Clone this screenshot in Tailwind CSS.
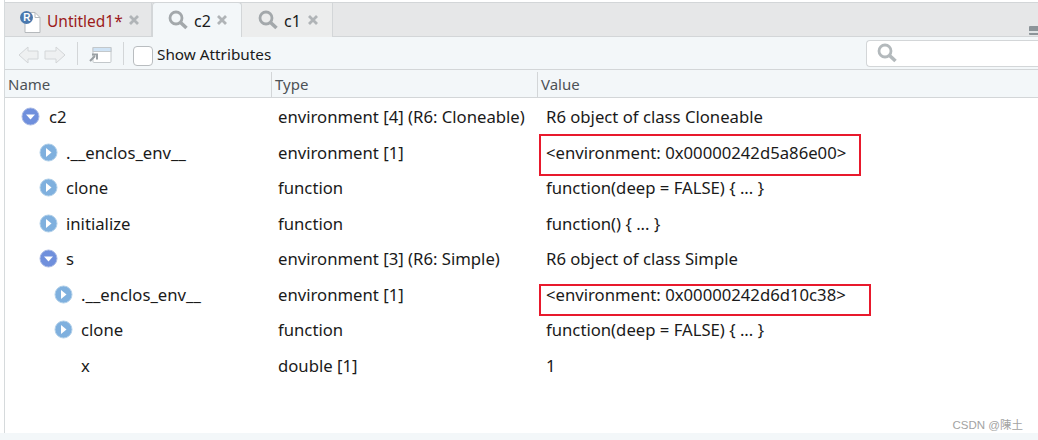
<!DOCTYPE html>
<html lang="en">
<head>
    <meta charset="UTF-8">
    <title>c2</title>
    <script src="https://cdn.jsdelivr.net/npm/@tailwindcss/browser@4"></script>
</head>
<body class="bg-white overflow-hidden">
    <div class="relative w-[1038px] h-[440px] overflow-hidden font-['Noto_Sans',sans-serif] text-[16.7px] text-[#1a1a1a]">
        <div class="h-[433px] ml-[4px] border-l border-[#d6dadc] flex flex-col">
            <!-- Tabs -->
            <div class="h-[35px] mt-[2px] bg-[#e6e7e8] border-y border-[#d3d6d8] flex relative">
                <div class="w-[147px] h-[34px] flex items-center pl-[14px] pt-[3px] border-r border-[#d3d6d8]">
                    <svg width="23" height="24" viewBox="0 0 23 24">
                        <path d="M6 2.5h10l5 5v15H6z" fill="#fff" stroke="#b5b9bc"/>
                        <path d="M16 2.5v5h5" fill="none" stroke="#b5b9bc"/>
                        <circle cx="7.5" cy="7.5" r="6.5" fill="#4a78ad"/>
                        <text x="4.2" y="11.2" font-size="10" font-weight="700" fill="#fff" font-family="Liberation Sans">R</text>
                    </svg>
                    <span class="ml-[5px] text-[15.5px] text-[#9c1b1b]">Untitled1*</span>
                    <svg class="ml-[5px] -mt-[3px]" width="12" height="12" viewBox="0 0 12 12"><path d="M2 2l8 8M10 2l-8 8" stroke="#b0b4b7" stroke-width="2.8"/></svg>
                </div>
                <div class="w-[90px] h-[35px] -mt-[1px] bg-[#f3f7f9] border-x border-t border-[#d3d6d8] rounded-t flex items-center pl-[15px]">
                    <svg width="20" height="20" viewBox="0 0 20 20" fill="none" stroke="#a3a8ab">
                        <circle cx="8" cy="8" r="6" stroke-width="2.8"/>
                        <path d="M12 12l6.5 6" stroke-width="3.6"/>
                    </svg>
                    <span class="ml-[6px] mt-[2px] text-[16px]">c2</span>
                    <svg class="ml-[5px]" width="12" height="12" viewBox="0 0 12 12"><path d="M2 2l8 8M10 2l-8 8" stroke="#b0b4b7" stroke-width="2.8"/></svg>
                </div>
                <div class="w-[91px] h-[34px] bg-[#eceded] border-r border-[#d3d6d8] flex items-center pl-[16px]">
                    <svg width="20" height="20" viewBox="0 0 20 20" fill="none" stroke="#a3a8ab">
                        <circle cx="8" cy="8" r="6" stroke-width="2.8"/>
                        <path d="M12 12l6.5 6" stroke-width="3.6"/>
                    </svg>
                    <span class="ml-[6px] mt-[2px] text-[16px]">c1</span>
                    <svg class="ml-[6px]" width="12" height="12" viewBox="0 0 12 12"><path d="M2 2l8 8M10 2l-8 8" stroke="#b0b4b7" stroke-width="2.8"/></svg>
                </div>
                <div class="absolute left-[1024px] top-[23px] w-[12px] h-[9px] rounded-[1px] bg-[#8c9499] border-t-[3px] border-[#8c9499] flex items-center">
                    <div class="w-full h-[2px] bg-[#dfe3e5]"></div>
                </div>
            </div>
            <!-- Toolbar -->
            <div class="h-[33px] pt-[3px] bg-[#f3f7f9] border-b border-[#d3d6d8] flex items-center pl-[13px] shrink-0">
                <svg width="48" height="20" viewBox="0 0 48 20" fill="#eef0f1" stroke="#d3d6d8">
                    <path d="M1 10l9-8v4h10v8H10v4z"/>
                    <path d="M47 10l-9-8v4H27v8h11v4z"/>
                </svg>
                <div class="w-px h-[23px] -mt-[3px] bg-[#d3d6d8] ml-[11px]"></div>
                <svg class="ml-[10px]" width="24" height="18" viewBox="0 0 24 18">
                    <rect x="5" y="1.5" width="18" height="15" rx="1" fill="#fff" stroke="#c3c8cb"/>
                    <rect x="5" y="1.5" width="18" height="4" fill="#cfe3f5" stroke="#c3c8cb"/>
                    <path d="M2 15l5-5M4 8.5h5v5" fill="none" stroke="#9aa0a4" stroke-width="2"/>
                </svg>
                <div class="w-px h-[23px] -mt-[3px] bg-[#d3d6d8] ml-[11px]"></div>
                <div class="w-[20px] h-[20px] ml-[9px] mt-[2px] bg-white border border-[#b9bdc0] rounded-[4px]"></div>
                <span class="ml-[4px] text-[15.3px]">Show Attributes</span>
                <div class="ml-auto w-[172px] h-[27px] -mt-[3px] bg-white border border-[#d3d6d8] border-r-0 rounded-l flex items-center pl-[10px]">
                    <svg width="20" height="20" viewBox="0 0 20 20" fill="none" stroke="#b3b9bc">
                        <circle cx="8" cy="8" r="6" stroke-width="2.8"/>
                        <path d="M12 12l6.5 6" stroke-width="3.6"/>
                    </svg>
                </div>
            </div>
            <!-- Header -->
            <div class="h-[28px] pt-[2px] bg-[#f3f7f9] border-b border-[#d3d6d8] flex items-center text-[15px] text-[#4d5256] shrink-0">
                <div class="w-[267px] h-full pl-[3px] border-r border-[#d3d6d8] flex items-center">Name</div>
                <div class="w-[266px] h-full pl-[3px] border-r border-[#d3d6d8] flex items-center">Type</div>
                <div class="pl-[3px]">Value</div>
            </div>
            <!-- Rows -->
            <div class="pt-[1px] flex-1">
                <div class="h-[35.5px] flex items-center">
                    <div class="w-[273px] flex items-center pl-[16px]"><svg width="19" height="19" viewBox="0 0 19 19"><circle cx="9.5" cy="9.5" r="8.5" fill="#6f8fdc" stroke="#a9b9e4"/><path d="M5 7.5h9l-4.5 5z" fill="#fff"/></svg><span class="ml-[9px]">c2</span></div>
                    <div class="w-[268px]">environment [4] (R6: Cloneable)</div>
                    <div>R6 object of class Cloneable</div>
                </div>
                <div class="h-[35.5px] flex items-center">
                    <div class="w-[273px] flex items-center pl-[34px]"><svg width="19" height="19" viewBox="0 0 19 19"><circle cx="9.5" cy="9.5" r="8.5" fill="#7fb0de" stroke="#b0cfe9"/><path d="M7 5l5.5 4.5L7 14z" fill="#fff"/></svg><span class="ml-[8px]">.__enclos_env__</span></div>
                    <div class="w-[268px]">environment [1]</div>
                    <div>&lt;environment: 0x00000242d5a86e00&gt;</div>
                </div>
                <div class="h-[35.5px] flex items-center">
                    <div class="w-[273px] flex items-center pl-[34px]"><svg width="19" height="19" viewBox="0 0 19 19"><circle cx="9.5" cy="9.5" r="8.5" fill="#7fb0de" stroke="#b0cfe9"/><path d="M7 5l5.5 4.5L7 14z" fill="#fff"/></svg><span class="ml-[8px]">clone</span></div>
                    <div class="w-[268px]">function</div>
                    <div>function(deep = FALSE) { ... }</div>
                </div>
                <div class="h-[35.5px] flex items-center">
                    <div class="w-[273px] flex items-center pl-[34px]"><svg width="19" height="19" viewBox="0 0 19 19"><circle cx="9.5" cy="9.5" r="8.5" fill="#7fb0de" stroke="#b0cfe9"/><path d="M7 5l5.5 4.5L7 14z" fill="#fff"/></svg><span class="ml-[8px]">initialize</span></div>
                    <div class="w-[268px]">function</div>
                    <div>function() { ... }</div>
                </div>
                <div class="h-[35.5px] flex items-center">
                    <div class="w-[273px] flex items-center pl-[34px]"><svg width="19" height="19" viewBox="0 0 19 19"><circle cx="9.5" cy="9.5" r="8.5" fill="#6f8fdc" stroke="#a9b9e4"/><path d="M5 7.5h9l-4.5 5z" fill="#fff"/></svg><span class="ml-[8px]">s</span></div>
                    <div class="w-[268px]">environment [3] (R6: Simple)</div>
                    <div>R6 object of class Simple</div>
                </div>
                <div class="h-[35.5px] flex items-center">
                    <div class="w-[273px] flex items-center pl-[49px]"><svg width="19" height="19" viewBox="0 0 19 19"><circle cx="9.5" cy="9.5" r="8.5" fill="#7fb0de" stroke="#b0cfe9"/><path d="M7 5l5.5 4.5L7 14z" fill="#fff"/></svg><span class="ml-[8px]">.__enclos_env__</span></div>
                    <div class="w-[268px]">environment [1]</div>
                    <div>&lt;environment: 0x00000242d6d10c38&gt;</div>
                </div>
                <div class="h-[35.5px] flex items-center">
                    <div class="w-[273px] flex items-center pl-[49px]"><svg width="19" height="19" viewBox="0 0 19 19"><circle cx="9.5" cy="9.5" r="8.5" fill="#7fb0de" stroke="#b0cfe9"/><path d="M7 5l5.5 4.5L7 14z" fill="#fff"/></svg><span class="ml-[8px]">clone</span></div>
                    <div class="w-[268px]">function</div>
                    <div>function(deep = FALSE) { ... }</div>
                </div>
                <div class="h-[35.5px] flex items-center">
                    <div class="w-[273px] pl-[76px]">x</div>
                    <div class="w-[268px]">double [1]</div>
                    <div>1</div>
                </div>
            </div>
        </div>
        <div class="h-[7px] bg-[#f3f7f9]"></div>
        <!-- Annotations on top of the screenshot -->
        <div class="absolute left-[539px] top-[134px] w-[322px] h-[42px] border-2 border-[#e8192c]"></div>
        <div class="absolute left-[539px] top-[284px] w-[332px] h-[32px] border-2 border-[#e8192c]"></div>
        <div class="absolute right-[15px] top-[417px] text-[11.5px] text-[#a3a3a3] font-['Liberation_Sans','Noto_Sans_CJK_SC',sans-serif]">CSDN @陳土</div>
    </div>
</body>
</html>
